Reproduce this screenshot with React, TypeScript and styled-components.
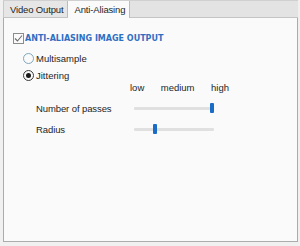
import React, {FC} from "react";
import styled, {createGlobalStyle} from "styled-components";

const GlobalStyle = createGlobalStyle`
  html, body {
    margin: 0;
    padding: 0;
    background: #f0f0f0;
  }
  body {
    font-family: "Liberation Sans", Arial, sans-serif;
    font-size: 9.5px;
    color: #1e1e1e;
  }
`

const Page = styled.div`
  width: 300px;
  height: 246px;
  box-sizing: border-box;
  padding: 0 2px 4px 3px;
  display: flex;
`

const Frame = styled.div`
  flex: 1;
  display: flex;
  flex-direction: column;
  border: 1px solid #ababab;
  border-top: none;
  background: #fafafa;
`

const TabStrip = styled.div`
  display: flex;
  height: 16px;
  background: #e3e3e3;
  border-top: 1px solid #d0d0d0;
  border-bottom: 1px solid #c4c4c4;
  margin: 0 -1px;
`

const Tab = styled.div<{ active?: boolean }>`
  display: flex;
  align-items: center;
  padding: 0 4px 0 6px;
  box-sizing: border-box;
  border-left: 1px solid #c8c8c8;
  border-right: 1px solid #bcbcbc;
  background: ${props => props.active ? "#fafafa" : "#e6e6e6"};
  height: ${props => props.active ? "17px" : "16px"};
  color: #1e1e1e;
  white-space: nowrap;
  letter-spacing: -0.15px;
  & + & {
    border-left: none;
  }
`

const Content = styled.div`
  display: flex;
  flex-direction: column;
  padding: 14px 0 0 9px;
`

const CheckRow = styled.label`
  display: flex;
  align-items: center;
  height: 13px;
  gap: 1px;
`

const CheckBox = styled.span`
  width: 9px;
  height: 9px;
  border: 1px solid #8c8c8c;
  background: #fafafa;
  display: flex;
  align-items: center;
  justify-content: center;
`

const GroupTitle = styled.span`
  font-family: "DejaVu Sans", Verdana, sans-serif;
  font-weight: bold;
  font-size: 8px;
  color: #2f6fc2;
`

const RadioRow = styled.label<{ top: number }>`
  display: flex;
  align-items: center;
  gap: 2px;
  height: 12px;
  margin: ${props => props.top}px 0 0 10px;
`

const RadioCircle = styled.span<{ checked?: boolean }>`
  width: 9px;
  height: 9px;
  border-radius: 50%;
  border: 1px solid ${props => props.checked ? "#3a3a3a" : "#7fa6bf"};
  background: #fafafa;
  display: flex;
  align-items: center;
  justify-content: center;
  &::after {
    content: "";
    display: ${props => props.checked ? "block" : "none"};
    width: 5px;
    height: 5px;
    border-radius: 50%;
    background: #1a1a1a;
  }
`

const Scale = styled.div`
  display: flex;
  justify-content: space-between;
  width: 99px;
  height: 11px;
  align-items: center;
  margin: 1px 0 0 117px;
`

const SliderRow = styled.div<{ top: number }>`
  display: grid;
  grid-template-columns: 98px 80px;
  align-items: center;
  height: 14px;
  margin: ${props => props.top}px 0 0 23px;
  letter-spacing: -0.1px;
`

const Track = styled.div`
  position: relative;
  height: 3px;
  background: #e0e0e0;
  border-radius: 1px;
`

const Thumb = styled.div`
  position: absolute;
  top: -4px;
  width: 4px;
  height: 10px;
  background: #1a6cc6;
  border-radius: 1px;
`

const Slider: FC<{ value: number }> = ({value}) => (
  <Track>
    <Thumb style={{left: `${value * 76}px`}}/>
  </Track>
)

export default function App() {
  return (
    <>
      <GlobalStyle/>
      <Page>
        <Frame>
          <TabStrip>
            <Tab>Video Output</Tab>
            <Tab active>Anti-Aliasing</Tab>
          </TabStrip>
          <Content>
            <CheckRow>
              <CheckBox>
                <svg width="9" height="9" viewBox="0 0 9 9">
                  <path d="M1 4.5 L3.5 7 L8 1.5" fill="none" stroke="#6a6a6a" strokeWidth="1.1"/>
                </svg>
              </CheckBox>
              <GroupTitle>ANTI-ALIASING IMAGE OUTPUT</GroupTitle>
            </CheckRow>
            <RadioRow top={7}>
              <RadioCircle/>
              <span>Multisample</span>
            </RadioRow>
            <RadioRow top={5}>
              <RadioCircle checked/>
              <span>Jittering</span>
            </RadioRow>
            <Scale>
              <span>low</span>
              <span>medium</span>
              <span>high</span>
            </Scale>
            <SliderRow top={8}>
              <span>Number of passes</span>
              <Slider value={1}/>
            </SliderRow>
            <SliderRow top={7}>
              <span>Radius</span>
              <Slider value={0.25}/>
            </SliderRow>
          </Content>
        </Frame>
      </Page>
    </>
  )
}
